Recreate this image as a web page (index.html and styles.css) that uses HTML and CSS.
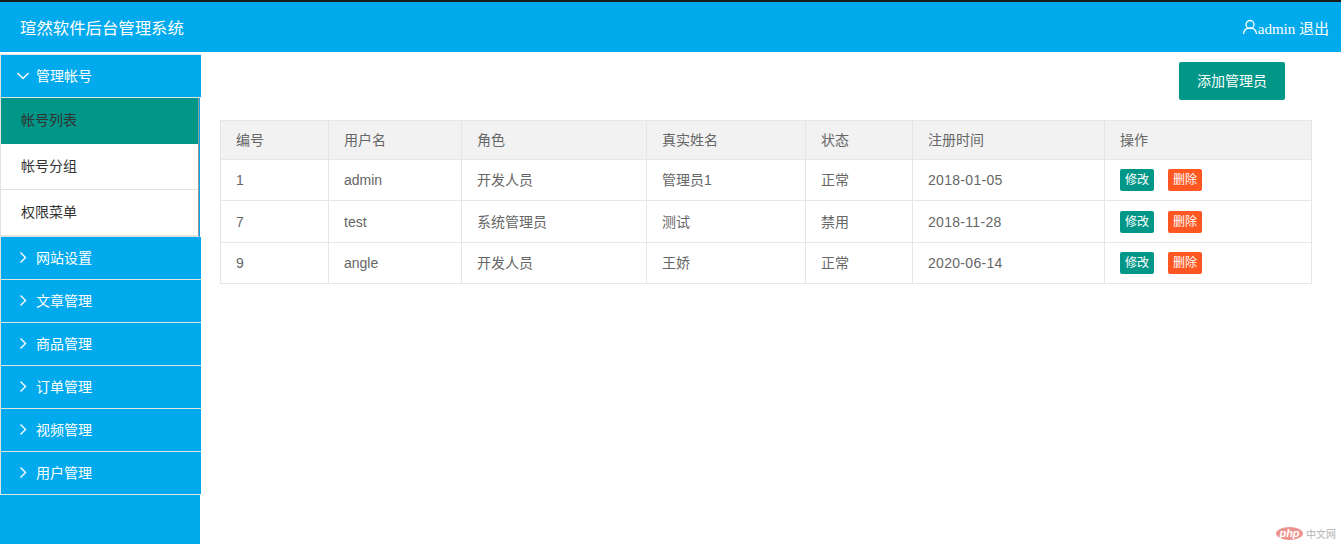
FILE: index.html
```html
<!DOCTYPE html>
<html>
<head>
    <title>瑄然软件后台管理系统</title>
    <link rel="stylesheet" href="styles.css">
</head>
<body>
    <div class="header">
        <div class="header-title">瑄然软件后台管理系统</div>
        <div class="header-user">
            <svg class="user-icon" width="16" height="16" viewBox="0 0 16 16">
                <circle cx="8" cy="5.5" r="4"/>
                <path d="M1.5 15c.3-3.6 2.6-6 6.5-6s6.200 2.400 6.500 6"/>
            </svg>
            <span>admin 退出</span>
        </div>
    </div>

    <div class="main">
        <div class="sidebar">
            <div class="menu">
                <div class="menu-item">
                    <svg class="arrow" width="14" height="14" viewBox="0 0 14 14"><path d="M1.500 4l5.500 5.500L12.500 4"/></svg>
                    <span>管理帐号</span>
                </div>
                <div class="submenu">
                    <div class="submenu-item active">帐号列表</div>
                    <div class="submenu-item">帐号分组</div>
                    <div class="submenu-item">权限菜单</div>
                </div>
                <div class="menu-item">
                    <svg class="arrow" width="14" height="14" viewBox="0 0 14 14"><path d="M4.500 1.500l5 5-5 5"/></svg>
                    <span>网站设置</span>
                </div>
                <div class="menu-item">
                    <svg class="arrow" width="14" height="14" viewBox="0 0 14 14"><path d="M4.500 1.500l5 5-5 5"/></svg>
                    <span>文章管理</span>
                </div>
                <div class="menu-item">
                    <svg class="arrow" width="14" height="14" viewBox="0 0 14 14"><path d="M4.500 1.500l5 5-5 5"/></svg>
                    <span>商品管理</span>
                </div>
                <div class="menu-item">
                    <svg class="arrow" width="14" height="14" viewBox="0 0 14 14"><path d="M4.500 1.500l5 5-5 5"/></svg>
                    <span>订单管理</span>
                </div>
                <div class="menu-item">
                    <svg class="arrow" width="14" height="14" viewBox="0 0 14 14"><path d="M4.500 1.500l5 5-5 5"/></svg>
                    <span>视频管理</span>
                </div>
                <div class="menu-item">
                    <svg class="arrow" width="14" height="14" viewBox="0 0 14 14"><path d="M4.500 1.500l5 5-5 5"/></svg>
                    <span>用户管理</span>
                </div>
            </div>
        </div>

        <div class="content">
            <div class="toolbar">
                <a href="#" class="add-button">添加管理员</a>
            </div>
            <table class="data-table">
                <thead>
                    <tr class="head-row">
                        <th class="col-id">编号</th>
                        <th class="col-name">用户名</th>
                        <th class="col-role">角色</th>
                        <th class="col-real">真实姓名</th>
                        <th class="col-state">状态</th>
                        <th class="col-date">注册时间</th>
                        <th>操作</th>
                    </tr>
                </thead>
                <tbody>
                    <tr class="row-a">
                        <td>1</td>
                        <td>admin</td>
                        <td class="cn">开发人员</td>
                        <td class="cn">管理员1</td>
                        <td class="cn">正常</td>
                        <td class="date">2018-01-05</td>
                        <td><a href="#" class="btn btn-edit">修改</a><a href="#" class="btn btn-del">删除</a></td>
                    </tr>
                    <tr class="row-b">
                        <td>7</td>
                        <td>test</td>
                        <td class="cn">系统管理员</td>
                        <td class="cn">测试</td>
                        <td class="cn">禁用</td>
                        <td class="date">2018-11-28</td>
                        <td><a href="#" class="btn btn-edit">修改</a><a href="#" class="btn btn-del">删除</a></td>
                    </tr>
                    <tr class="row-a">
                        <td>9</td>
                        <td>angle</td>
                        <td class="cn">开发人员</td>
                        <td class="cn">王娇</td>
                        <td class="cn">正常</td>
                        <td class="date">2020-06-14</td>
                        <td><a href="#" class="btn btn-edit">修改</a><a href="#" class="btn btn-del">删除</a></td>
                    </tr>
                </tbody>
            </table>
        </div>
    </div>

    <div class="watermark">
        <span class="php-badge">php</span>
        <span class="php-text">中文网</span>
    </div>
</body>
</html>
```

FILE: styles.css
```css
* {
    box-sizing: border-box;
}

html, body {
    height: 100%;
}

body {
    margin: 0;
    padding: 0;
    background-color: #ffffff;
    color: #666666;
    font-family: "Liberation Sans", "Noto Sans CJK SC", Arial, sans-serif;
    font-size: 14px;
    overflow: hidden;
}

a {
    text-decoration: none;
}

.header {
    display: flex;
    align-items: center;
    justify-content: space-between;
    height: 52px;
    padding: 0 12px 0 20px;
    background-color: #01aaed;
    border-top: 2px solid #1a1a1a;
    color: #ffffff;
}

.header-title {
    font-size: 16.4px;
}

.header-user {
    display: flex;
    align-items: center;
    font-family: "Liberation Serif", "Noto Sans CJK SC", serif;
    font-size: 15px;
}

.user-icon {
    fill: none;
    stroke: #ffffff;
    stroke-width: 1.300;
}

.main {
    display: flex;
    height: 492px;
}

.sidebar {
    flex: none;
    width: 200px;
    border-top: 2px solid #ffffff;
    background-color: #01aaed;
}

.menu {
    width: 201px;
    border-top: 1px solid #e2e2e2;
    border-left: 1px solid #e2e2e2;
    position: relative;
}

.menu-item {
    display: flex;
    align-items: center;
    height: 43px;
    padding-left: 15px;
    background-color: #01aaed;
    border-bottom: 1px solid #e2e2e2;
    color: #ffffff;
}

.menu-item span {
    padding-bottom: 2px;
}

.arrow {
    flex: none;
    margin-right: 6px;
    fill: none;
    stroke: #ffffff;
    stroke-width: 1.400;
}

.submenu {
    margin-right: 2px;
    background-color: #ffffff;
    border-right: 1px solid #999999;
    border-bottom: 2px solid #e2e2e2;
    color: #333333;
}

.submenu-item {
    height: 46px;
    line-height: 45px;
    padding-left: 20px;
    border-bottom: 1px solid #e2e2e2;
}

.submenu-item:last-child {
    height: 45px;
    border-bottom: none;
}

.submenu-item.active {
    background-color: #009688;
    border-bottom: none;
}

.content {
    flex: 1;
    padding: 10px 29px 0 20px;
}

.toolbar {
    display: flex;
    justify-content: flex-end;
    padding-right: 27px;
    margin-bottom: 20px;
}

.add-button {
    width: 106px;
    height: 38px;
    line-height: 38px;
    text-align: center;
    background-color: #009688;
    border-radius: 2px;
    color: #ffffff;
}

.data-table {
    width: 1092px;
    table-layout: fixed;
    border-collapse: collapse;
    border: 1px solid #e6e6e6;
}

.data-table th,
.data-table td {
    padding: 0 15px;
    border: 1px solid #e6e6e6;
    text-align: left;
    font-weight: normal;
}

.data-table th,
.data-table td.cn {
    padding-bottom: 2px;
}

.data-table td.date {
    letter-spacing: 0.3px;
}

.head-row {
    height: 39px;
    background-color: #f2f2f2;
}

.row-a {
    height: 41px;
}

.row-b {
    height: 42px;
}

.col-id {
    width: 108px;
}

.col-name {
    width: 133px;
}

.col-role {
    width: 185px;
}

.col-real {
    width: 159px;
}

.col-state {
    width: 107px;
}

.col-date {
    width: 192px;
}

.btn {
    display: inline-block;
    width: 34px;
    height: 22px;
    line-height: 22px;
    margin-right: 14px;
    text-align: center;
    border-radius: 2px;
    font-size: 12px;
    color: #ffffff;
    vertical-align: middle;
}

.btn-edit {
    background-color: #009688;
}

.btn-del {
    background-color: #ff5722;
}

.watermark {
    position: absolute;
    right: 5px;
    bottom: 3px;
    display: flex;
    align-items: center;
    gap: 3px;
    opacity: 0.75;
}

.php-badge {
    width: 27px;
    height: 13px;
    line-height: 12px;
    border-radius: 50%;
    background-color: #e8706a;
    color: #ffffff;
    text-align: center;
    font-size: 11px;
    font-style: italic;
    font-weight: bold;
}

.php-text {
    font-size: 10px;
    color: #999999;
}
```
